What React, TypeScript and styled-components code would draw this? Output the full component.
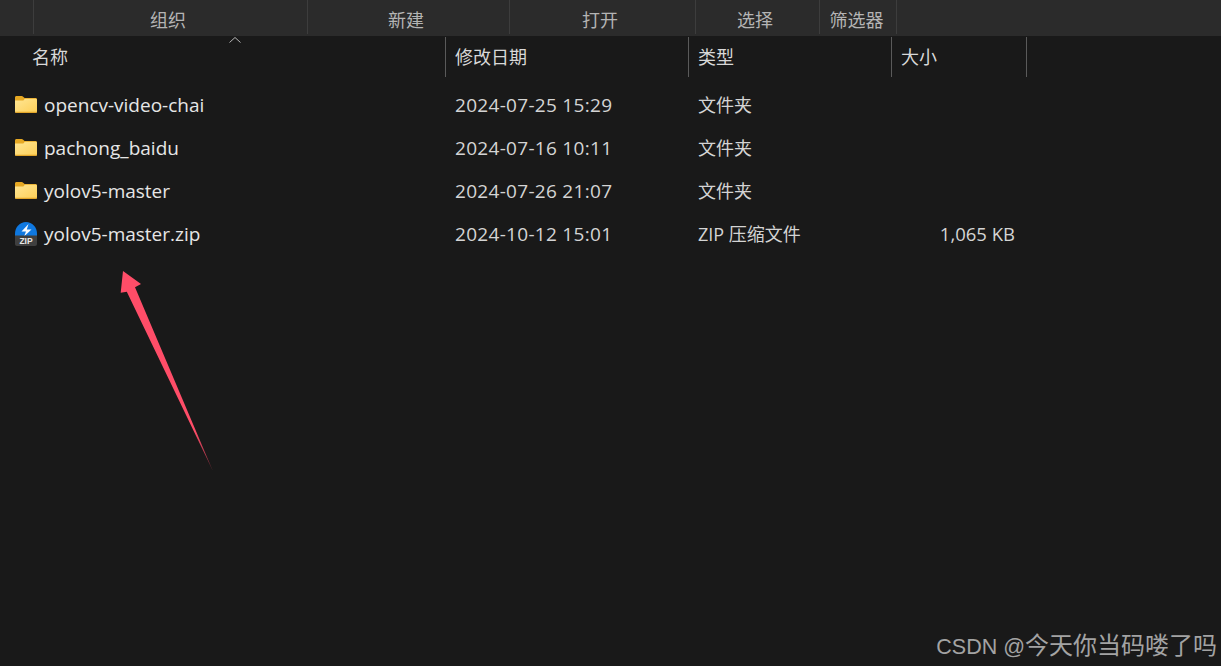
import styled, { createGlobalStyle } from "styled-components";

const CJK = `"Open Sans", "Noto Sans CJK SC", sans-serif`;

const tools = [
  { label: "组织", width: 274 },
  { label: "新建", width: 202 },
  { label: "打开", width: 186 },
  { label: "选择", width: 124 },
  { label: "筛选器", width: 78 },
];

const columns = [
  { label: "名称", indent: 32 },
  { label: "修改日期", indent: 9 },
  { label: "类型", indent: 9 },
  { label: "大小", indent: 9 },
];

const files = [
  { name: "opencv-video-chai", date: "2024-07-25 15:29", type: "文件夹", size: "", zip: false },
  { name: "pachong_baidu", date: "2024-07-16 10:11", type: "文件夹", size: "", zip: false },
  { name: "yolov5-master", date: "2024-07-26 21:07", type: "文件夹", size: "", zip: false },
  { name: "yolov5-master.zip", date: "2024-10-12 15:01", type: "ZIP 压缩文件", size: "1,065 KB", zip: true },
];

const FolderIcon = () => (
  <svg width="24" height="20" viewBox="0 1 24 20">
    <defs>
      <linearGradient id="folderFill" x1="0" y1="0" x2="1" y2="1">
        <stop offset="0" stopColor="#ffe694" />
        <stop offset="1" stopColor="#fdcf57" />
      </linearGradient>
    </defs>
    <path d="M1 3.500C1 2.600 1.600 2 2.500 2h5.200c.5 0 .9.2 1.200.5L10.600 4H21.500c.9 0 1.500.6 1.500 1.500V8H1z" fill="#e6a823" />
    <path d="M1 6.500h8.400l1.400-1.700H21.700c.8 0 1.300.5 1.300 1.300v11.400c0 .8-.5 1.300-1.300 1.300H2.300c-.8 0-1.300-.5-1.300-1.300z" fill="url(#folderFill)" />
    <path d="M1 17.800h22c0 .7-.5 1.200-1.300 1.200H2.300C1.500 19 1 18.500 1 17.800z" fill="#e3a62a" />
  </svg>
);

const ZipIcon = () => (
  <svg width="24" height="26" viewBox="0 0 24 26">
    <path d="M1 12.500C1 6.200 5.900 1 12 1s11 5.200 11 11.500V15H1z" fill="#0f78e0" />
    <path d="M14.500 3 7.500 10.500h4.500L10 15.500 17.500 8.500h-4.700z" fill="#f7fafe" />
    <path d="M1 14.500h22V23c0 1.300-.9 2-2 2H3c-1.100 0-2-.7-2-2z" fill="#3f3f3f" />
    <text x="12" y="23" textAnchor="middle" fontFamily="'Liberation Sans', sans-serif" fontSize="8.500" fontWeight="700" fill="#e8e8e8">
      ZIP
    </text>
  </svg>
);

const App = () => {
  return (
    <Window>
      <GlobalStyle />
      <Toolbar>
        {tools.map((tool) => (
          <ToolButton key={tool.label} $width={tool.width}>
            {tool.label}
          </ToolButton>
        ))}
      </Toolbar>
      <HeaderRow>
        {columns.map((column) => (
          <HeaderCell key={column.label} $indent={column.indent}>
            {column.label}
          </HeaderCell>
        ))}
        <SortCaret width="14" height="8" viewBox="0 0 14 8">
          <path d="M1.500 6.500 7 1.500l5.500 5" fill="none" stroke="#b5b5b5" strokeWidth="1" />
        </SortCaret>
      </HeaderRow>
      <FileList>
        {files.map((file) => (
          <FileRow key={file.name}>
            <NameCell>
              <IconSlot>{file.zip ? <ZipIcon /> : <FolderIcon />}</IconSlot>
              {file.name}
            </NameCell>
            <DateCell>{file.date}</DateCell>
            <TypeCell>{file.type}</TypeCell>
            <SizeCell>{file.size}</SizeCell>
          </FileRow>
        ))}
      </FileList>
      <Arrow width="100" height="205" viewBox="0 0 100 205">
        <defs>
          <linearGradient id="arrowTail" x1="0.800" y1="0.800" x2="1" y2="1">
            <stop offset="0" stopColor="#ff4d68" />
            <stop offset="1" stopColor="#7a2a38" />
          </linearGradient>
        </defs>
        <path d="M3 1 21 14 15 17.300 92.800 200.800 6.800 21.700 0.700 22.700z" fill="url(#arrowTail)" />
      </Arrow>
      <Watermark>
        <WatermarkLatin>CSDN @</WatermarkLatin>今天你当码喽了吗
      </Watermark>
    </Window>
  );
};

const GlobalStyle = createGlobalStyle`
  html, body {
    margin: 0;
    padding: 0;
    background: #191919;
  }
`;

const Window = styled.div`
  position: relative;
  width: 1221px;
  height: 666px;
  overflow: hidden;
  background: #191919;
  font-family: ${CJK};
  font-size: 18px;
`;

const Toolbar = styled.div`
  display: flex;
  align-items: flex-start;
  height: 36px;
  padding-left: 33px;
  background: #2b2b2b;
`;

const ToolButton = styled.div<{ $width: number }>`
  box-sizing: border-box;
  width: ${({ $width }) => $width}px;
  height: 34px;
  padding-right: 5px;
  border-left: 1px solid #3d3d3d;
  color: #b4b4b4;
  line-height: 41px;
  text-align: center;
  white-space: nowrap;

  &:last-child {
    border-right: 1px solid #3d3d3d;
    padding-right: 3px;
  }
`;

const HeaderRow = styled.div`
  position: relative;
  display: grid;
  grid-template-columns: 446px 243px 203px 135px;
  width: 1027px;
  height: 41px;
  padding-top: 1px;
`;

const HeaderCell = styled.div<{ $indent: number }>`
  box-sizing: border-box;
  height: 40px;
  padding-left: ${({ $indent }) => $indent}px;
  border-right: 1px solid #5a5a5a;
  color: #d8d8d8;
  line-height: 40px;
`;

const SortCaret = styled.svg`
  position: absolute;
  left: 228px;
  top: 0;
`;

const FileList = styled.div`
  display: flex;
  flex-direction: column;
  padding-top: 5px;
`;

const FileRow = styled.div`
  display: grid;
  grid-template-columns: 446px 243px 203px 135px;
  width: 1027px;
  height: 43px;
  align-items: center;
  color: #e6e6e6;
`;

const NameCell = styled.div`
  display: flex;
  align-items: center;
  padding-left: 14px;
  font-size: 19px;
  white-space: nowrap;
`;

const IconSlot = styled.span`
  display: flex;
  width: 30px;
`;

const DateCell = styled.div`
  padding-left: 9px;
  color: #d4d4d4;
  font-size: 19px;
  letter-spacing: 0.3px;
  white-space: nowrap;
`;

const TypeCell = styled.div`
  padding: 0 0 2px 9px;
  color: #d4d4d4;
  word-spacing: 0;
  white-space: nowrap;
`;

const SizeCell = styled.div`
  padding-right: 12px;
  color: #d4d4d4;
  font-size: 18.500px;
  text-align: right;
  white-space: nowrap;
`;

const Arrow = styled.svg`
  position: absolute;
  left: 120px;
  top: 270px;
`;

const Watermark = styled.div`
  position: absolute;
  right: 4px;
  bottom: 5px;
  color: #a3a3a3;
  font-family: "Liberation Sans", "Noto Sans CJK SC", sans-serif;
  font-size: 24px;
  line-height: 28px;
  white-space: nowrap;
`;

const WatermarkLatin = styled.span`
  font-size: 21.500px;
`;

export default App;
